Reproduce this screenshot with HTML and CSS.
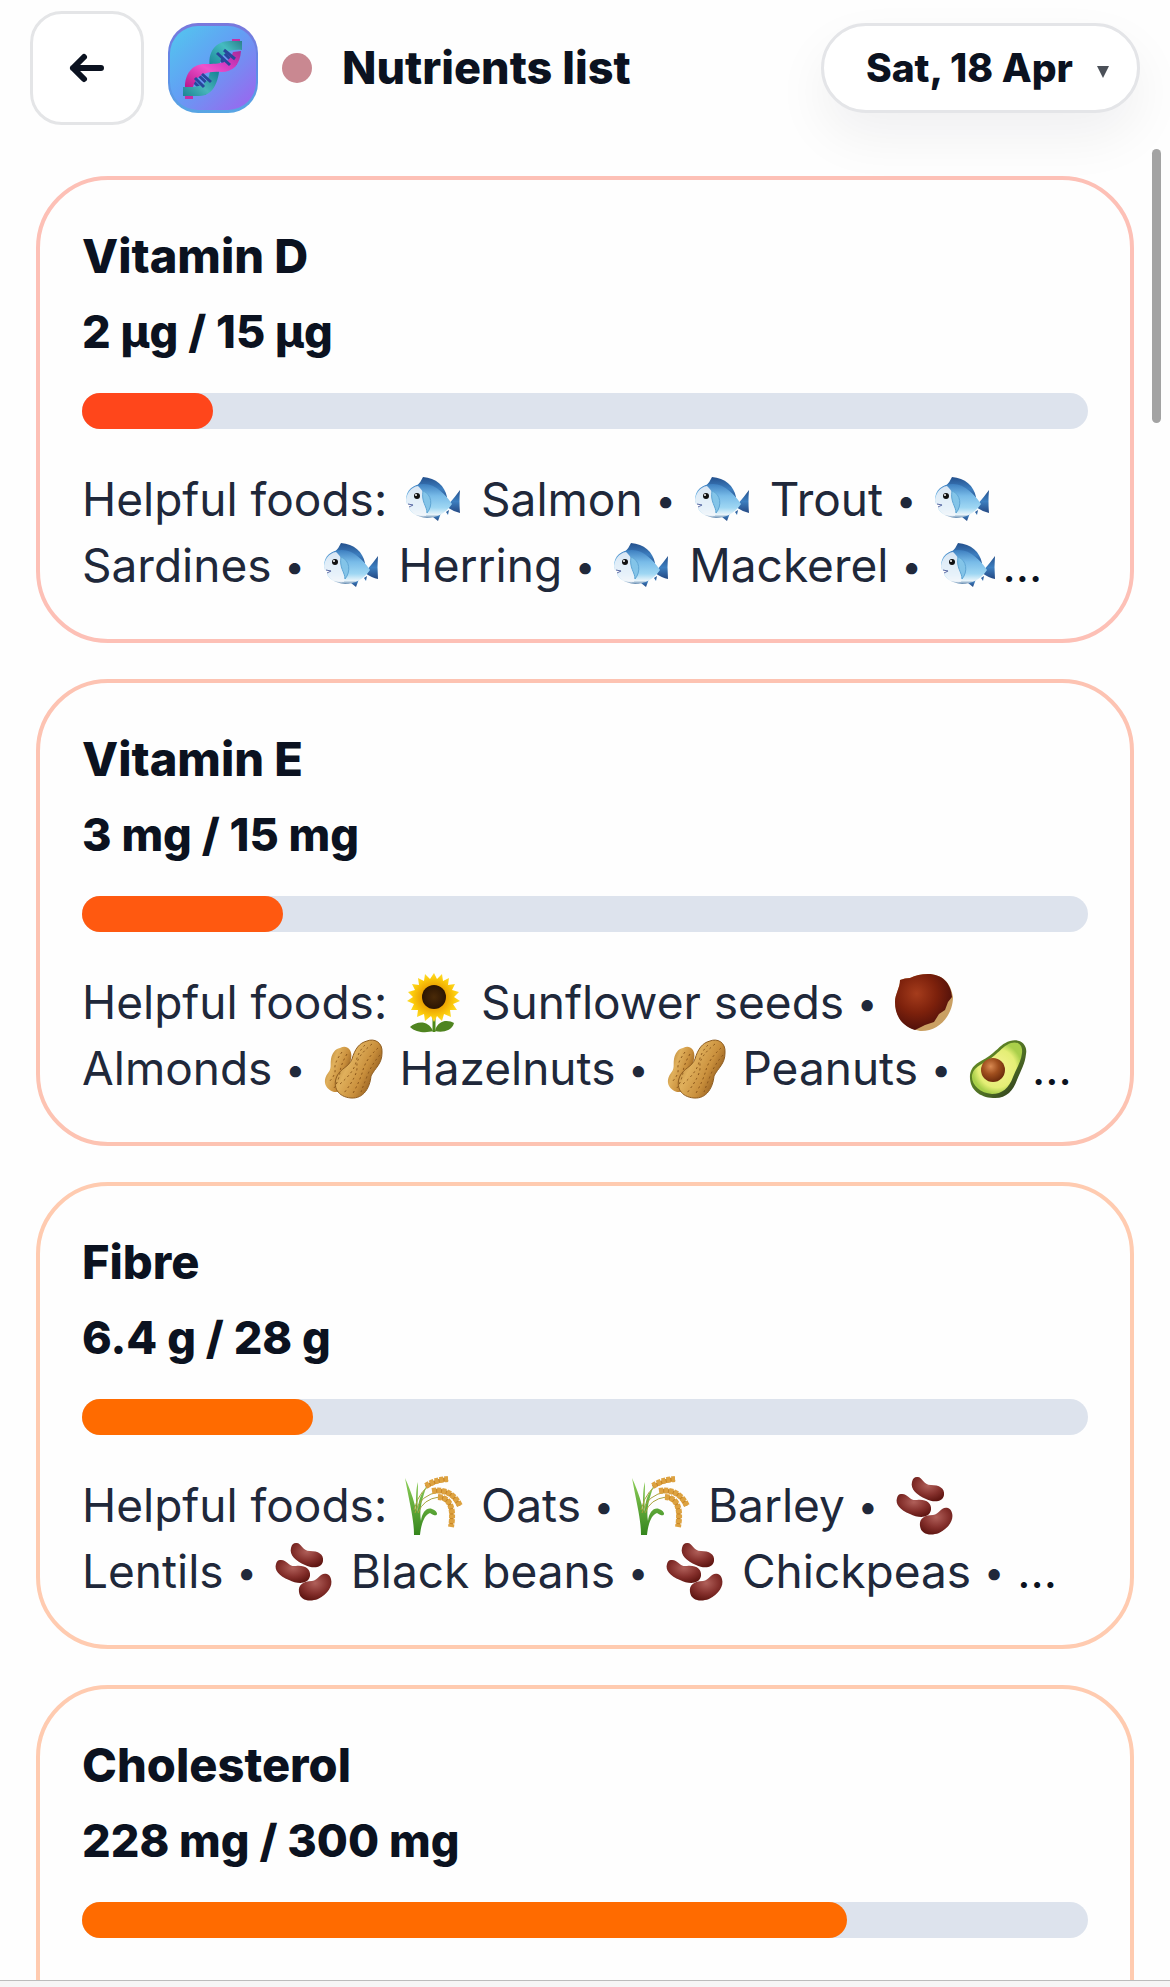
FILE: index.html
```html
<!DOCTYPE html>
<html lang="en">
<head>
<meta charset="utf-8">
<meta name="viewport" content="width=device-width, initial-scale=1">
<title>Nutrients list</title>
<link rel="stylesheet" href="styles.css">
</head>
<body>
<svg class="sprite" aria-hidden="true">
  <defs>
    <linearGradient id="fishBody" x1="0" y1="0" x2="0" y2="1"><stop offset="0" stop-color="#3d7fc0"/><stop offset=".35" stop-color="#78bbe8"/><stop offset=".7" stop-color="#9fd7f3"/><stop offset=".9" stop-color="#e8f4fa"/><stop offset="1" stop-color="#5f86ad"/></linearGradient>
    <linearGradient id="fin" x1="0" y1="0" x2="0" y2="1"><stop offset="0" stop-color="#24508c"/><stop offset=".5" stop-color="#3d7fc0"/><stop offset="1" stop-color="#244882"/></linearGradient>
    <radialGradient id="seedHead"><stop offset="0" stop-color="#4a2a08"/><stop offset="1" stop-color="#2b1503"/></radialGradient>
    <radialGradient id="petal"><stop offset=".4" stop-color="#e89c00"/><stop offset=".8" stop-color="#fccb0c"/><stop offset="1" stop-color="#fddc2e"/></radialGradient>
    <radialGradient id="nut" cx=".38" cy=".35" r=".7"><stop offset="0" stop-color="#a53c1c"/><stop offset=".5" stop-color="#7d210c"/><stop offset="1" stop-color="#4a0e0a"/></radialGradient>
    <linearGradient id="shell" x1="0" y1="0" x2="1" y2=".6"><stop offset="0" stop-color="#9d6a22"/><stop offset=".4" stop-color="#e0b05c"/><stop offset=".7" stop-color="#c98f3c"/><stop offset="1" stop-color="#8a5418"/></linearGradient>
    <linearGradient id="skin" x1="0" y1="0" x2="1" y2="1"><stop offset="0" stop-color="#6f9a25"/><stop offset=".6" stop-color="#4c6b24"/><stop offset="1" stop-color="#252c1c"/></linearGradient>
    <radialGradient id="flesh"><stop offset="0" stop-color="#f6f294"/><stop offset=".75" stop-color="#e4ee75"/><stop offset="1" stop-color="#a9cf4a"/></radialGradient>
    <radialGradient id="pit" cx=".4" cy=".35" r=".65"><stop offset="0" stop-color="#d98a52"/><stop offset=".5" stop-color="#a04f1e"/><stop offset="1" stop-color="#6d2c0c"/></radialGradient>
    <linearGradient id="leaf" x1="0" y1="0" x2="0" y2="1"><stop offset="0" stop-color="#8fd05a"/><stop offset="1" stop-color="#34851c"/></linearGradient>
    <radialGradient id="bean" cx=".5" cy=".35" r=".65"><stop offset="0" stop-color="#b0605a"/><stop offset=".6" stop-color="#85302c"/><stop offset="1" stop-color="#611713"/></radialGradient>
    <linearGradient id="appBg" x1="0" y1="0" x2="1" y2="1"><stop offset="0" stop-color="#52c8ee"/><stop offset=".45" stop-color="#62a0f4"/><stop offset="1" stop-color="#a060ee"/></linearGradient>
    <linearGradient id="appRim" x1="0" y1="0" x2="0" y2="1"><stop offset="0" stop-color="#7a78dc"/><stop offset=".5" stop-color="#5f8ae8"/><stop offset="1" stop-color="#58a6e4"/></linearGradient>
    <linearGradient id="teal" x1="0" y1="1" x2="1" y2="0"><stop offset="0" stop-color="#1c8594"/><stop offset=".25" stop-color="#48b5ba"/><stop offset=".5" stop-color="#1a8698"/><stop offset=".8" stop-color="#45bcc0"/><stop offset="1" stop-color="#2b7f8c"/></linearGradient>
    <linearGradient id="pink" x1="0" y1="1" x2="1" y2="0"><stop offset="0" stop-color="#b5188e"/><stop offset=".45" stop-color="#f052cc"/><stop offset=".7" stop-color="#d23ac0"/><stop offset="1" stop-color="#a82a98"/></linearGradient>
  </defs>
  <symbol id="fish" viewBox="0 0 60 60">
    <path d="M12 17Q17 12 19 7C32 8 41 16 43 27L41 31Z" fill="url(#fin)"/>
    <path d="M44 35Q51 27 56 20Q55 31 56 43Q50 42 43 37Z" fill="url(#fin)"/>
    <path d="M29 47l5 4 3 -8zM42 42l2 3 1 -5z" fill="url(#fin)"/>
    <path d="M2 30C2 20 9 14 20 14C32 14 42 25 48 34C42 43 33 48 23 48C12 47 6 42 5 38L10 35L3 34Z" fill="url(#fishBody)"/>
    <path d="M2 30C3 23 7 17 14 16C20 21 26 33 22 46C13 47 7 42 5 38L10 35L3 34Z" fill="#f2f6fa" opacity=".85"/>
    <path d="M19 21C28 24 29 36 23 43C23 36 17 32 19 21Z" fill="#83c4e8" stroke="#5ea5d4" stroke-width="1"/>
    <path d="M4 34L9 35L5 37" fill="none" stroke="#5c6ba5" stroke-width="1"/>
    <circle cx="13" cy="26" r="3" fill="#111"/><circle cx="12" cy="25" r="1" fill="#fff"/>
  </symbol>
  <symbol id="sunflower" viewBox="0 0 60 60">
    <path d="M30 42v17" stroke="#4c8a1b" stroke-width="3"/>
    <path d="M29 58C24 47 13 48 6 54C12 60 23 60 29 58ZM31 58C34 46 45 47 50 50C48 58 38 60 31 58Z" fill="#4f8420"/>
    <path d="M30 0l3 6 5-5 1 7 6-3-1 7 7-1-3 6 7 2-5 5 6 4-7 3 4 6-7 0 1 7-7-3-2 7-5-5-3 6-3-6-6 5-1-7-7 3 1-7-7 0 3-6-7-3 6-4-5-5 7-2-3-6 7 1-1-7 6 3 1-7 5 5Z" fill="url(#petal)"/>
    <circle cx="30" cy="24" r="12" fill="url(#seedHead)"/>
  </symbol>
  <symbol id="chestnut" viewBox="0 0 60 60">
    <path d="M6 7Q11 5 16 5Q24 1 34 1C48 1 57 10 59 24C59 43 44 59 26 58C10 55 1 44 1 29C1 21 6 15 6 7Z" fill="#caa063"/>
    <path d="M6 7Q11 5 16 5Q24 1 34 1C48 1 57 10 58 24L54 29L51 37L45 41L40 49L31 52L21 57C8 53 1 43 1 29C1 21 6 15 6 7Z" fill="url(#nut)"/>
  </symbol>
  <symbol id="peanut" viewBox="0 0 60 60">
    <path d="M17 9C24 5 30 11 28 20C27 27 24 29 24 37C25 48 19 54 11 53C2 50 -1 42 5 34C9 29 7 26 8 20C9 14 12 10 17 9Z" fill="url(#shell)"/>
    <path d="M44 2C51 -1 60 3 59 14C59 25 52 29 48 37C47 48 41 60 28 59C15 58 9 48 14 37C18 29 26 28 29 20C32 10 36 4 44 2Z" fill="url(#shell)" stroke="#8f5d20" stroke-width="1"/>
    <path d="M49 5Q33 18 34 27T21 54M55 9Q43 20 40 31T29 56M57 16Q49 25 45 35T38 53M42 6Q35 13 33 23T17 45M19 13Q11 24 12 30T5 44M24 15Q18 25 17 33T11 49" fill="none" stroke="#865218" stroke-width="1" stroke-dasharray="2 3"/>
  </symbol>
  <symbol id="avocado" viewBox="0 0 60 60">
    <path d="M42 2C51 -1 60 5 58 15C57 25 53 31 49 41C45 52 38 60 25 59C11 58 1 50 2 36C4 23 15 23 25 14C32 8 35 4 42 2Z" fill="url(#skin)"/>
    <path d="M43 4C50 2 55 6 54 14C53 23 49 28 45 38C41 49 34 55 24 55C12 54 3 46 4 36C6 26 17 25 27 16C34 10 37 6 43 4Z" fill="url(#flesh)"/>
    <circle cx="25" cy="31" r="12" fill="url(#pit)"/>
  </symbol>
  <symbol id="grain" viewBox="0 0 60 60">
    <path d="M10 59C10 44 6 29 1 2C8 17 11 29 12 34C12 21 12 12 14 6C14 20 13 31 14 36C14 20 20 15 23 9C18 23 15 34 17 45C18 36 23 31 28 33C36 36 34 43 26 37C20 39 17 49 16 59Z" fill="url(#leaf)"/>
    <path d="M10 34Q15 12 34 5M11 37Q16 18 36 16M14 37Q19 23 35 21Q45 22 48 39" fill="none" stroke="#a8a23c" stroke-width="1"/>
    <path d="M22 11Q30 5 44 3M29 15Q48 13 55 30M34 21Q51 22 47 50" fill="none" stroke="#c78424" stroke-width="4"/>
    <path d="M22 10Q30 4 44 3M28 15Q48 12 56 30M34 21Q52 22 47 51" fill="none" stroke="#dda240" stroke-width="6" stroke-dasharray="4 1"/>
  </symbol>
  <symbol id="beans" viewBox="0 0 60 60">
    <g fill="url(#bean)">
      <path d="M22 1C27 0 28 9 36 9C44 9 50 12 49 19C48 26 39 27 31 23C22 19 15 13 17 6Q18 1 22 1Z"/>
      <path d="M6 18C13 17 14 25 22 24C31 23 37 27 36 34C34 43 23 42 15 38C5 34 0 28 2 22Q3 18 6 18Z"/>
      <path d="M53 32C46 30 45 38 38 39C29 39 24 43 25 50C26 59 36 60 44 57C54 52 59 44 57 37Q56 33 53 32Z"/>
    </g>
  </symbol>
</svg>

<div class="app">
  <header class="topbar">
    <button class="back" type="button" aria-label="Back">
      <svg viewBox="0 0 40 40" aria-hidden="true"><path d="M34 20H6M17 9L6 20L17 31" fill="none" stroke="currentColor" stroke-width="6" stroke-linecap="round" stroke-linejoin="round"/></svg>
    </button>
    <svg class="logo" viewBox="0 0 90 90" role="img" aria-label="DNA">
      <rect width="90" height="90" rx="30" fill="url(#appRim)"/>
      <rect x="2" y="3" width="86" height="84" rx="28" fill="url(#appBg)"/>
      <path d="M64 16h8v4h-8zM17 72h8v4h-8z" fill="#c52ea6"/>
      <path d="M47 30L61 46M53 27L68 42M23 56L38 71M29 51L44 65" stroke="#27479c" stroke-width="3"/>
      <path d="M74 18V27C61 26 54 30 52 40C51 56 47 73 31 73H15V64H25C38 63 42 56 42 45C39 29 48 18 62 18Z" fill="url(#teal)"/>
      <path d="M65 29L73 28C72 41 66 49 53 49C38 48 28 52 25 64H17C17 51 24 41 37 41C53 41 62 40 65 29Z" fill="url(#pink)"/>
      <path d="M49 30L62 42M56 27L67 36M27 55L36 64M34 51L43 59" stroke="#27479c" stroke-width="3"/>
    </svg>
    <span class="status-dot"></span>
    <h1 class="title">Nutrients list</h1>
    <button class="date" type="button">Sat, 18 Apr <svg class="caret" viewBox="0 0 12 12" aria-hidden="true"><path d="M0 0h12l-6 12z" fill="#4b5058"/></svg></button>
  </header>

  <main class="list">
    <article class="card card-red">
      <h2 class="name">Vitamin D</h2>
      <p class="amount">2 µg / 15 µg</p>
      <div class="track"><div class="fill" style="width:13%"></div></div>
      <p class="foods">
        <span class="line">Helpful foods: <svg class="emoji"><use href="#fish"/></svg> Salmon <span class="dot">•</span> <svg class="emoji"><use href="#fish"/></svg> Trout <span class="dot">•</span> <svg class="emoji"><use href="#fish"/></svg></span>
        <span class="line">Sardines <span class="dot">•</span> <svg class="emoji"><use href="#fish"/></svg> Herring <span class="dot">•</span> <svg class="emoji"><use href="#fish"/></svg> Mackerel <span class="dot">•</span> <svg class="emoji"><use href="#fish"/></svg><span class="more">…</span></span>
      </p>
    </article>
    <article class="card card-ember">
      <h2 class="name">Vitamin E</h2>
      <p class="amount">3 mg / 15 mg</p>
      <div class="track"><div class="fill" style="width:20%"></div></div>
      <p class="foods">
        <span class="line">Helpful foods: <svg class="emoji"><use href="#sunflower"/></svg> Sunflower seeds <span class="dot">•</span> <svg class="emoji"><use href="#chestnut"/></svg></span>
        <span class="line">Almonds <span class="dot">•</span> <svg class="emoji"><use href="#peanut"/></svg> Hazelnuts <span class="dot">•</span> <svg class="emoji"><use href="#peanut"/></svg> Peanuts <span class="dot">•</span> <svg class="emoji"><use href="#avocado"/></svg><span class="more">…</span></span>
      </p>
    </article>
    <article class="card card-orange">
      <h2 class="name">Fibre</h2>
      <p class="amount">6.4 g / 28 g</p>
      <div class="track"><div class="fill" style="width:23%"></div></div>
      <p class="foods">
        <span class="line">Helpful foods: <svg class="emoji"><use href="#grain"/></svg> Oats <span class="dot">•</span> <svg class="emoji"><use href="#grain"/></svg> Barley <span class="dot">•</span> <svg class="emoji"><use href="#beans"/></svg></span>
        <span class="line">Lentils <span class="dot">•</span> <svg class="emoji"><use href="#beans"/></svg> Black beans <span class="dot">•</span> <svg class="emoji"><use href="#beans"/></svg> Chickpeas <span class="dot">•</span> <span class="more">…</span></span>
      </p>
    </article>
    <article class="card card-orange">
      <h2 class="name">Cholesterol</h2>
      <p class="amount">228 mg / 300 mg</p>
      <div class="track"><div class="fill" style="width:76%"></div></div>
    </article>
  </main>
  <div class="scroll-thumb"></div>
  <footer class="bottom-edge"></footer>
</div>
</body>
</html>
```
FILE: styles.css
```css
* { box-sizing: border-box; }

body {
  margin: 0;
  background: #fefefe;
  color: #0b1220;
  font-family: Inter, "Liberation Sans", sans-serif;
}

h1, h2, p { margin: 0; }

.sprite { position: absolute; width: 0; height: 0; }

.app {
  position: relative;
  display: flex;
  flex-direction: column;
  height: 100vh;
}

.topbar {
  display: flex;
  align-items: center;
  gap: 24px;
  height: 136px;
  padding: 0 30px;
  flex: none;
}

.back {
  display: grid;
  place-items: center;
  width: 114px;
  height: 114px;
  padding: 0;
  border: 3px solid #e4e5e7;
  border-radius: 32px;
  background: #fff;
  color: #0b1220;
}

.back svg { width: 40px; height: 40px; }

.logo { width: 90px; height: 90px; }

.status-dot {
  width: 30px;
  height: 30px;
  border-radius: 50%;
  background: #c98891;
}

.title {
  margin-left: 6px;
  font-size: 45px;
  font-weight: 800;
  line-height: 54px;
  white-space: nowrap;
}

.date {
  display: flex;
  align-items: center;
  gap: 24px;
  height: 90px;
  margin-left: auto;
  padding: 0 28px 0 42px;
  border: 3px solid #e4e5e8;
  border-radius: 45px;
  background: #fff;
  box-shadow: 0 24px 54px rgba(15, 23, 42, 0.06);
  color: #0b1220;
  font: 800 39px/48px Inter, "Liberation Sans", sans-serif;
  white-space: nowrap;
}

.caret { width: 12px; height: 12px; margin-top: 8px; }

.list {
  display: flex;
  flex: 1;
  flex-direction: column;
  gap: 36px;
  min-height: 0;
  padding: 40px 36px;
  overflow-y: auto;
  scrollbar-width: none;
}

.card {
  flex: none;
  min-height: 467px;
  padding: 42px 42px 41px;
  border: 4px solid var(--edge);
  border-radius: 72px;
}

.card-red { --edge: #fdc0b6; --level: #ff461b; }
.card-ember { --edge: #fdc3b2; --level: #ff5910; }
.card-orange { --edge: #ffcbb0; --level: #ff6b00; }

.name {
  font-size: 47px;
  font-weight: 800;
  line-height: 68px;
}

.amount {
  margin-top: 10px;
  font-size: 45px;
  font-weight: 800;
  line-height: 64px;
}

.track {
  height: 36px;
  margin-top: 29px;
  border-radius: 18px;
  background: #dde3ed;
}

.fill {
  height: 100%;
  border-radius: 18px;
  background: var(--level);
}

.foods {
  margin-top: 37px;
  color: #20283a;
  font-size: 46px;
  line-height: 66px;
}

.line { display: block; white-space: nowrap; }

.dot { font-size: 36px; line-height: 1; vertical-align: 3px; }

.emoji {
  width: 60px;
  height: 60px;
  margin: 0 4px;
  vertical-align: -14px;
}

.more { color: #0b1220; }

.scroll-thumb {
  position: absolute;
  top: 149px;
  right: 9px;
  width: 9px;
  height: 274px;
  border-radius: 5px;
  background: #a3a3a3;
}

.bottom-edge {
  flex: none;
  height: 7px;
  border-top: 1px solid #bcbcbc;
  background: #f6f6f6;
}
```
